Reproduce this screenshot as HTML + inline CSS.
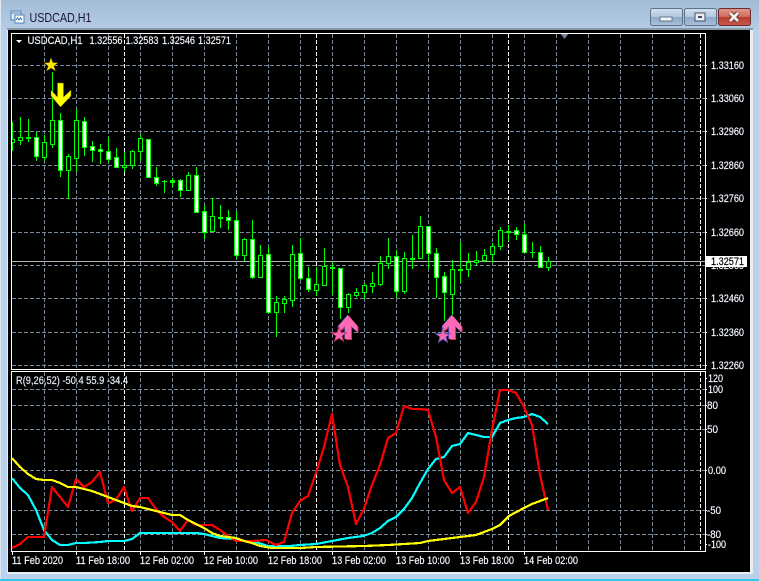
<!DOCTYPE html>
<html><head><meta charset="utf-8"><title>USDCAD,H1</title>
<style>
html,body{margin:0;padding:0;width:759px;height:581px;overflow:hidden;background:#b9d1ea}
svg{display:block}
text{font-family:"Liberation Sans",sans-serif;font-size:10.8px;fill:#fff;stroke:#dfeaff;stroke-width:.18px}
.g{fill:none;stroke:#778899;stroke-dasharray:4 2;shape-rendering:crispEdges}
.w{fill:none;stroke:#fff;stroke-dasharray:4 2;shape-rendering:crispEdges}
.c{shape-rendering:crispEdges}
.l{fill:none;stroke-width:2.2;stroke-linejoin:round;shape-rendering:crispEdges}
</style></head><body>
<svg width="759" height="581" viewBox="0 0 759 581" xmlns="http://www.w3.org/2000/svg">
<defs>
<linearGradient id="bb" x1="0" y1="0" x2="0" y2="1"><stop offset="0" stop-color="#d2e0ee"/><stop offset=".48" stop-color="#b4c8de"/><stop offset=".52" stop-color="#8ea9c7"/><stop offset="1" stop-color="#a9c2dc"/></linearGradient>
<linearGradient id="cb" x1="0" y1="0" x2="0" y2="1"><stop offset="0" stop-color="#e09a8c"/><stop offset=".48" stop-color="#cf6b5e"/><stop offset=".52" stop-color="#b83c30"/><stop offset="1" stop-color="#c9584c"/></linearGradient>
<linearGradient id="t2" x1="0" y1="0" x2="0" y2="1"><stop offset="0" stop-color="#a3bcd6"/><stop offset="1" stop-color="#b4cce4"/></linearGradient>
</defs>
<rect width="759" height="581" fill="#b9d1ea"/>
<rect width="759" height="29" fill="url(#t2)"/>
<rect x="0" y="0" width="1" height="581" fill="#dfe8f2"/>
<!-- title icon -->
<rect x="11" y="11" width="10" height="9" fill="#dbe8f5" stroke="#5b86b8" class="c"/>
<rect x="15" y="15" width="9" height="8" fill="#fff" stroke="#4f80b8" class="c"/>
<path d="M11 13h10" stroke="#5b86b8" class="c"/>
<path d="M16 20l1.500-2 1.500 2 1.500-2 1.500 2" stroke="#3d6fae" fill="none"/>
<text x="29.500" y="22" textLength="62" lengthAdjust="spacingAndGlyphs" style="font-size:12.500px;fill:#1c1436;stroke:none">USDCAD,H1</text>
<!-- buttons -->
<rect x="650.500" y="8.500" width="32" height="17" rx="2" fill="url(#bb)" stroke="#5d718a"/>
<rect x="660" y="17" width="12" height="4" fill="#f2f5f8" stroke="#4e5f75" stroke-width=".8"/>
<rect x="684.500" y="8.500" width="32" height="17" rx="2" fill="url(#bb)" stroke="#5d718a"/>
<rect x="695" y="13" width="10" height="8" fill="#e8eef4" stroke="#3f4f63"/><rect x="698" y="16" width="4" height="2" fill="#3f4f63"/>
<rect x="718.500" y="8.500" width="32" height="17" rx="2" fill="url(#cb)" stroke="#6d2a33"/>
<path d="M730 13l8 8M738 13l-8 8" stroke="#5d2a2a" stroke-width="4.500"/>
<path d="M730 13l8 8M738 13l-8 8" stroke="#f6eeee" stroke-width="2.800"/>
<!-- client -->
<rect x="7" y="28" width="746" height="546" fill="#e9eef3"/>
<rect x="7" y="28" width="746" height="2" fill="#8b98a5"/>
<rect x="8" y="30" width="742" height="542" fill="#000"/>
<!-- grid -->
<path class="g" d="M12 65.500H705M12 98.500H705M12 131.500H705M12 165.500H705M12 198.500H705M12 232.500H705M12 265.500H705M12 298.500H705M12 332.500H705M12 365.500H705"/>
<path class="g" d="M12 389.500H705M12 405.500H705M12 429.500H705M12 470.500H705M12 510.500H705M12 534.500H705"/>
<path class="g" d="M44.500 34V369M76.500 34V369M108.500 34V369M140.500 34V369M172.500 34V369M204.500 34V369M236.500 34V369M268.500 34V369M300.500 34V369M332.500 34V369M364.500 34V369M396.500 34V369M428.500 34V369M460.500 34V369M492.500 34V369M524.500 34V369M556.500 34V369M588.500 34V369M620.500 34V369M652.500 34V369M684.500 34V369"/>
<path class="g" d="M44.500 372V551M76.500 372V551M108.500 372V551M140.500 372V551M172.500 372V551M204.500 372V551M236.500 372V551M268.500 372V551M300.500 372V551M332.500 372V551M364.500 372V551M396.500 372V551M428.500 372V551M460.500 372V551M492.500 372V551M524.500 372V551M556.500 372V551M588.500 372V551M620.500 372V551M652.500 372V551M684.500 372V551"/>
<path class="w" d="M124.500 34V369M316.500 34V369M508.500 34V369M700.500 34V369M124.500 372V551M316.500 372V551M508.500 372V551M700.500 372V551"/>
<!-- price line -->
<path class="c" d="M12 261.500H705" stroke="#b4b4b4"/>
<!-- wicks -->
<path class="c" stroke="#00ff00" fill="none" d="M12.500 122V151M20.500 117V145M28.500 119V142M36.500 132V161M44.500 135V161M52.500 72V148M60.500 113V177M68.500 154V199M76.500 109V172M84.500 117V156M92.500 141V162M100.500 144V164M108.500 137V162M116.500 148V167M124.500 152V172M132.500 150V169M140.500 134V161M148.500 139V178M156.500 167V186M164.500 180V193M172.500 178V187M180.500 179V197M188.500 172V191M196.500 167V213M204.500 205V239M212.500 198V231M220.500 205V228M228.500 210V230M236.500 211V259M244.500 238V261M252.500 220V279M260.500 245V278M268.500 247V314M276.500 296V337M284.500 296V313M292.500 245V307M300.500 238V280M308.500 267V292M316.500 267V296M324.500 248V286M332.500 262V295M340.500 268V319M348.500 293V313M356.500 288V297M364.500 283V299M372.500 272V293M380.500 256V286M388.500 238V269M396.500 250V298M404.500 252V294M412.500 235V269M420.500 216V259M428.500 226V269M436.500 248V298M444.500 272V321M452.500 260V315M460.500 242V283M468.500 253V277M476.500 251V265M484.500 249V262M492.500 243V263M500.500 227V250M508.500 225V241M516.500 227V240M524.500 224V253M532.500 242V258M540.500 246V268M548.500 257V271"/>
<!-- hollow bodies -->
<path class="c" stroke="#00ff00" fill="#000" d="M11.500 139.500h3v3h-3zM18.500 137.500h4v3h-4zM42.500 142.500h4v15h-4zM50.500 120.500h4v24h-4zM66.500 156.500h4v14h-4zM74.500 120.500h4v38h-4zM122.500 165.500h4v2h-4zM130.500 151.500h4v14h-4zM138.500 138.500h4v13h-4zM186.500 175.500h4v15h-4zM210.500 216.500h4v15h-4zM242.500 239.500h4v16h-4zM258.500 255.500h4v22h-4zM274.500 302.500h4v10h-4zM282.500 299.500h4v4h-4zM290.500 254.500h4v46h-4zM314.500 284.500h4v6h-4zM322.500 266.500h4v19h-4zM346.500 294.500h4v13h-4zM354.500 292.500h4v3h-4zM362.500 285.500h4v7h-4zM370.500 283.500h4v3h-4zM378.500 263.500h4v21h-4zM386.500 256.500h4v7h-4zM402.500 258.500h4v33h-4zM418.500 226.500h4v32h-4zM450.500 269.500h4v25h-4zM466.500 262.500h4v7h-4zM474.500 260.500h4v2h-4zM482.500 255.500h4v5h-4zM490.500 246.500h4v8h-4zM498.500 230.500h4v16h-4zM546.500 261.500h4v6h-4z"/>
<!-- white bodies -->
<path class="c" stroke="#00ff00" fill="#fff" d="M34.500 137.500h4v19h-4zM58.500 120.500h4v50h-4zM82.500 121.500h4v26h-4zM90.500 146.500h4v4h-4zM98.500 149.500h4v2h-4zM106.500 151.500h4v8h-4zM114.500 157.500h4v10h-4zM146.500 139.500h4v38h-4zM154.500 177.500h4v6h-4zM178.500 180.500h4v10h-4zM194.500 175.500h4v37h-4zM202.500 211.500h4v21h-4zM226.500 217.500h4v3h-4zM234.500 220.500h4v35h-4zM250.500 239.500h4v38h-4zM266.500 254.500h4v58h-4zM298.500 253.500h4v25h-4zM306.500 278.500h4v11h-4zM338.500 268.500h4v39h-4zM394.500 256.500h4v35h-4zM426.500 226.500h4v27h-4zM434.500 253.500h4v24h-4zM442.500 276.500h4v16h-4zM514.500 230.500h4v4h-4zM522.500 234.500h4v18h-4zM538.500 252.500h4v15h-4z"/>
<!-- doji -->
<path class="c" fill="#00ff00" d="M26 137h5v2h-5zM162 181h5v1h-5zM170 180h5v3h-5zM218 217h5v2h-5zM330 267h5v2h-5zM410 258h5v2h-5zM458 269h5v2h-5zM506 231h5v2h-5zM530 252h5v1h-5z"/>
<!-- yellow markers -->
<polygon fill="#ffe400" stroke="#6b5a00" stroke-width=".5" points="51,57.500 52.800,62.600 58.100,62.700 53.900,65.900 55.400,71.100 51,68 46.600,71.100 48.100,65.900 43.900,62.700 49.200,62.600"/>
<path fill="#ffff00" stroke="#6b6b00" stroke-width=".5" d="M57.500 83H63.500V97L71 90V96L60.500 107L51 96V90L57.500 97Z"/>
<!-- pink markers -->
<path fill="#d8304f" transform="translate(1,1)" d="M348 315L357.500 326V332L351 326V339H345V326L338.500 332V326Z"/>
<path fill="#5a55c8" transform="translate(-.7,0)" d="M348 315L357.500 326V332L351 326V339H345V326L338.500 332V326Z"/>
<path fill="#ff69b4" d="M348 315L357.500 326V332L351 326V339H345V326L338.500 332V326Z"/>
<polygon fill="#c23060" stroke="#c23060" stroke-width="1" points="339,327.500 340.800,332.600 346.100,332.700 341.900,335.900 343.400,341.100 339,338 334.600,341.100 336.100,335.900 331.900,332.700 337.200,332.600"/>
<polygon fill="#ff69b4" points="339,328.500 340.700,333.100 345.200,333.300 341.500,335.900 342.800,340 339,337.700 335.200,340 336.500,335.900 332.800,333.300 337.300,333.100"/>
<g transform="translate(104,0)">
<path fill="#d8304f" transform="translate(1,1)" d="M348 315L357.500 326V332L351 326V339H345V326L338.500 332V326Z"/>
<path fill="#5a55c8" transform="translate(-.7,0)" d="M348 315L357.500 326V332L351 326V339H345V326L338.500 332V326Z"/>
<path fill="#ff69b4" d="M348 315L357.500 326V332L351 326V339H345V326L338.500 332V326Z"/>
</g>
<polygon fill="#c23060" stroke="#5a55c8" stroke-width="1" points="443,328.500 444.800,333.600 450.100,333.700 445.900,336.900 447.400,342.100 443,339 438.600,342.100 440.100,336.900 435.900,333.700 441.200,333.600"/>
<polygon fill="#ff69b4" points="443,329.500 444.700,334.100 449.200,334.300 445.500,336.900 446.800,341 443,338.700 439.200,341 440.500,336.900 436.800,334.300 441.300,334.100"/>
<!-- top triangle -->
<path d="M560 33H569L564.500 39Z" fill="#77889b"/>
<!-- frames -->
<path class="c" fill="none" stroke="#fff" d="M11.500 33.500H705.500V369.500H11.500ZM11.500 371.500H705.500V551.500H11.500Z"/>
<!-- indicator lines -->
<polyline class="l" stroke="#00ffff" points="12,478 20,488 28,495 36,510 44,530 52,540 60,545 68,545 76,543 84,543 100,542 108,541 116,541 124,541 132,539 140,533 148,533 196,533 204,534 212,536 220,538 236,539 244,541 252,541 262,544 268,546 290,546 300,545 316,544 332,541 348,538 363,536 372,533 380,528 388,521 396,517 404,509 412,498 420,483 428,469 436,459 444,457 452,446 460,444 468,433 476,435 484,437 492,437 500,423 508,420 516,418 524,417 532,414 540,417 548,424"/>
<polyline class="l" stroke="#ff0000" points="12,548 20,544 28,537 44,537 52,487 60,497 68,507 76,479 84,487 92,482 100,472 108,503 116,500 124,487 132,511 140,498 148,498 156,509 164,517 172,522 180,531 188,520 196,525 212,525 220,530 228,536 236,541 252,541 266,540 276,545 284,542 292,513 300,501 308,496 316,473 324,447 332,414 340,465 348,487 356,524 364,509 372,485 380,465 388,438 396,433 404,406 412,409 420,409 428,410 436,437 444,480 452,493 460,487 468,513 476,502 484,477 492,430 500,390 508,390 516,393 524,407 532,425 540,475 548,510"/>
<polyline class="l" stroke="#ffff00" points="12,458 20,467 28,474 36,479 44,480 52,480 60,483 68,487 76,487 84,489 92,491 100,494 108,497 116,500 124,503 132,506 140,507 148,509 156,511 164,513 172,515 180,515 188,520 196,524 204,528 212,533 220,536 228,537 236,538 244,541 252,543 260,546 272,548 300,548 316,547 364,546 388,545 404,544 420,543 428,541 444,539 460,537 476,535 492,529 500,525 509,516 524,508 532,504 548,498"/>
<!-- header -->
<path d="M16 40H22L19 43Z" fill="#fff"/>
<text x="27.500" y="44" textLength="55" lengthAdjust="spacingAndGlyphs">USDCAD,H1</text>
<text x="89.500" y="44" textLength="33" lengthAdjust="spacingAndGlyphs">1.32556</text>
<text x="125.500" y="44" textLength="33" lengthAdjust="spacingAndGlyphs">1.32583</text>
<text x="162" y="44" textLength="33" lengthAdjust="spacingAndGlyphs">1.32546</text>
<text x="198" y="44" textLength="33" lengthAdjust="spacingAndGlyphs">1.32571</text>
<text x="16" y="384" textLength="112" lengthAdjust="spacingAndGlyphs" style="fill:#eee">R(9,26,52) -50.4 55.9 -34.4</text>
<!-- axis ticks -->
<path class="c" stroke="#fff" d="M705 65.500h2M705 98.500h2M705 131.500h2M705 165.500h2M705 198.500h2M705 232.500h2M705 265.500h2M705 298.500h2M705 332.500h2M705 365.500h2M705 378.500h2M705 389.500h2M705 405.500h2M705 429.500h2M705 470.500h2M705 510.500h2M705 534.500h2M705 544.500h2M12.500 552v3M76.500 552v3M140.500 552v3M204.500 552v3M268.500 552v3M332.500 552v3M396.500 552v3M460.500 552v3M524.500 552v3"/>
<!-- price axis -->
<text x="711" y="69" textLength="33" lengthAdjust="spacingAndGlyphs">1.33160</text>
<text x="711" y="102" textLength="33" lengthAdjust="spacingAndGlyphs">1.33060</text>
<text x="711" y="135" textLength="33" lengthAdjust="spacingAndGlyphs">1.32960</text>
<text x="711" y="169" textLength="33" lengthAdjust="spacingAndGlyphs">1.32860</text>
<text x="711" y="202" textLength="33" lengthAdjust="spacingAndGlyphs">1.32760</text>
<text x="711" y="236" textLength="33" lengthAdjust="spacingAndGlyphs">1.32660</text>
<text x="711" y="269" textLength="33" lengthAdjust="spacingAndGlyphs">1.32560</text>
<text x="711" y="302" textLength="33" lengthAdjust="spacingAndGlyphs">1.32460</text>
<text x="711" y="336" textLength="33" lengthAdjust="spacingAndGlyphs">1.32360</text>
<text x="711" y="369" textLength="33" lengthAdjust="spacingAndGlyphs">1.32260</text>
<rect x="706" y="256" width="41" height="11" fill="#fff"/>
<text x="711" y="265" textLength="33" lengthAdjust="spacingAndGlyphs" style="fill:#000;stroke:#000">1.32571</text>
<!-- indicator axis -->
<text x="708" y="382" textLength="15" lengthAdjust="spacingAndGlyphs">120</text>
<text x="708" y="393" textLength="15" lengthAdjust="spacingAndGlyphs">100</text>
<text x="707" y="409" textLength="11" lengthAdjust="spacingAndGlyphs">80</text>
<text x="707" y="433" textLength="11" lengthAdjust="spacingAndGlyphs">50</text>
<text x="708" y="474" textLength="18" lengthAdjust="spacingAndGlyphs">0.00</text>
<text x="707" y="514" textLength="14" lengthAdjust="spacingAndGlyphs">-50</text>
<text x="707" y="538" textLength="14" lengthAdjust="spacingAndGlyphs">-80</text>
<text x="708" y="548" textLength="18" lengthAdjust="spacingAndGlyphs">-100</text>
<!-- time axis -->
<text x="12" y="564" textLength="51" lengthAdjust="spacingAndGlyphs">11 Feb 2020</text>
<text x="76" y="564" textLength="54" lengthAdjust="spacingAndGlyphs">11 Feb 18:00</text>
<text x="140" y="564" textLength="54" lengthAdjust="spacingAndGlyphs">12 Feb 02:00</text>
<text x="204" y="564" textLength="54" lengthAdjust="spacingAndGlyphs">12 Feb 10:00</text>
<text x="268" y="564" textLength="54" lengthAdjust="spacingAndGlyphs">12 Feb 18:00</text>
<text x="332" y="564" textLength="54" lengthAdjust="spacingAndGlyphs">13 Feb 02:00</text>
<text x="396" y="564" textLength="54" lengthAdjust="spacingAndGlyphs">13 Feb 10:00</text>
<text x="460" y="564" textLength="54" lengthAdjust="spacingAndGlyphs">13 Feb 18:00</text>
<text x="524" y="564" textLength="54" lengthAdjust="spacingAndGlyphs">14 Feb 02:00</text>
<!-- bottom accent -->
<rect x="0" y="579" width="759" height="2" fill="#35c6e6"/>
</svg>
</body></html>
